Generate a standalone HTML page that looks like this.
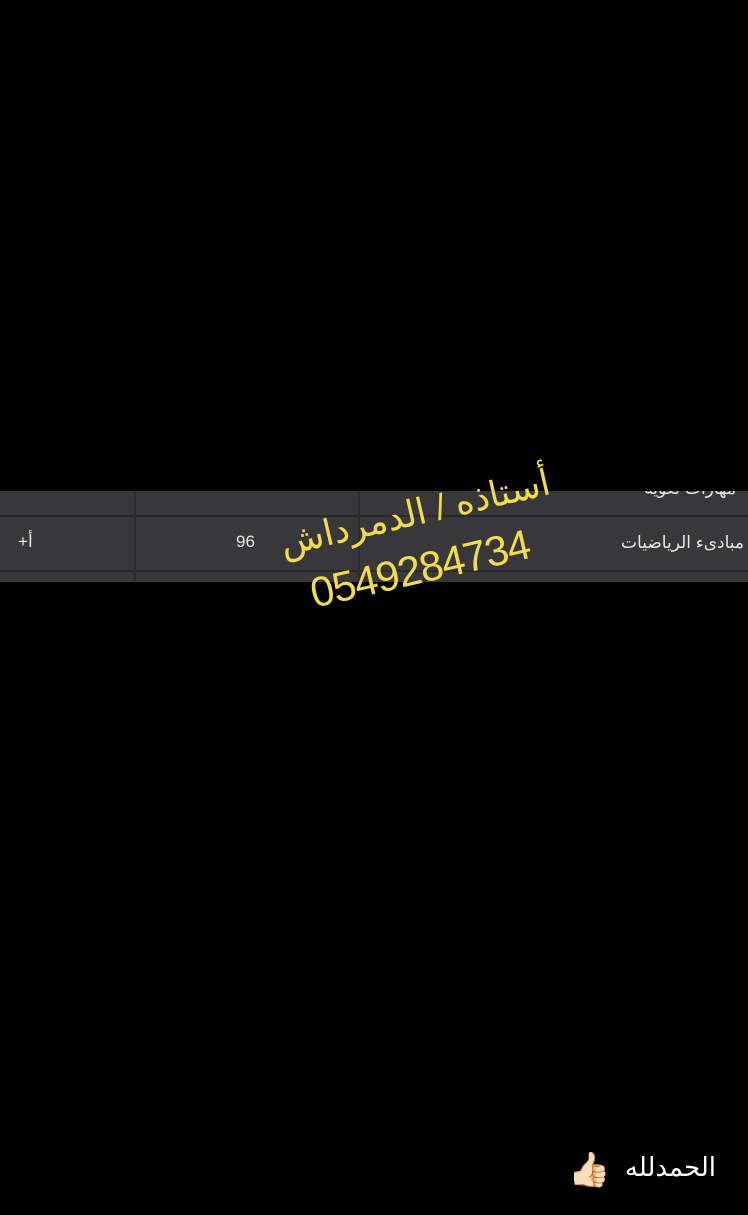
<!DOCTYPE html>
<html><head><meta charset="utf-8"><style>
body{margin:0;width:748px;height:1215px;background:#000;position:relative;overflow:hidden;font-family:"Liberation Sans","DejaVu Sans",sans-serif}
.strip{position:absolute;left:0;top:491px;width:748px;height:91px;background:#38383a;overflow:hidden}
.hl{position:absolute;left:0;width:748px;height:2px;background:#2a2a2c}
.vl{position:absolute;top:0;width:2px;height:91px;background:#2c2c2e}
.t{position:absolute;color:#e8e8e8;font-size:17px;white-space:nowrap}
.y{position:absolute;color:#f3dc4a;white-space:nowrap;transform-origin:center;transform:rotate(-13deg)}
</style></head><body>
<div class="strip">
<div class="hl" style="top:24px"></div>
<div class="hl" style="top:79px"></div>
<div class="vl" style="left:134px"></div>
<div class="vl" style="left:358px"></div>
<div class="t" style="right:12px;top:-12px;direction:rtl">مهارات لغوية</div>
<div class="t" style="right:4px;top:42px;direction:rtl">مبادىء الرياضيات</div>
<div class="t" style="left:236px;top:41px">96</div>
<div class="t" style="left:18px;top:41px">+أ</div>
</div>
<div class="y" style="left:270px;top:492px;font-size:36px;width:290px;text-align:center;direction:rtl">أستاذه / الدمرداش</div>
<div class="y" style="left:300px;top:545px;font-size:42px;width:240px;text-align:center;letter-spacing:-1px">0549284734</div>
<div style="position:absolute;right:32px;top:1152px;color:#fff;font-size:26px;direction:rtl">الحمدلله</div>
<div style="position:absolute;left:568px;top:1150px;font-size:34px">👍🏻</div>
</body></html>
